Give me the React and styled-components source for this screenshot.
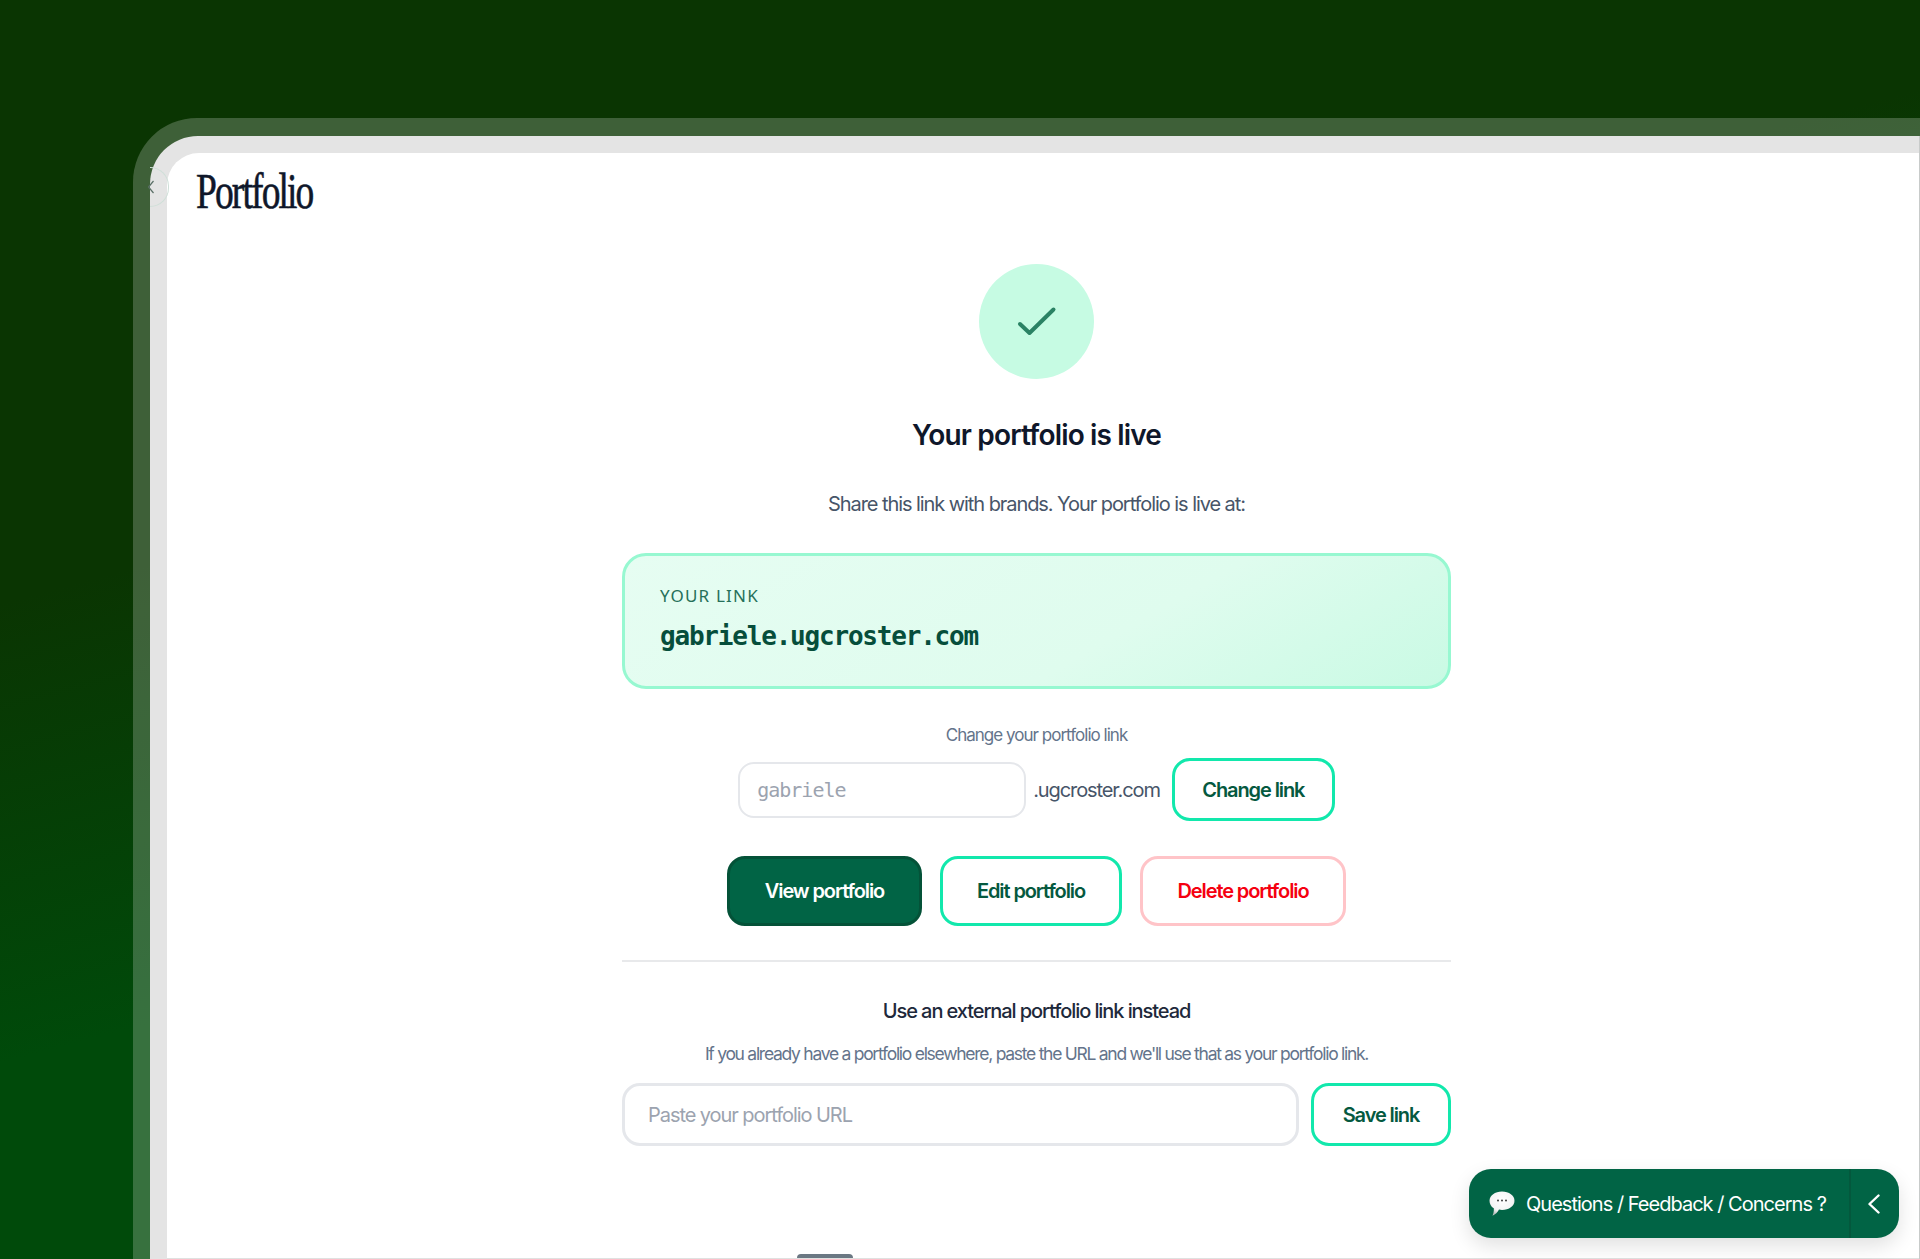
import React from "react";
import styled, { createGlobalStyle } from "styled-components";

const GlobalStyle = createGlobalStyle`
  html, body {
    margin: 0;
    padding: 0;
    height: 1259px;
    overflow: hidden;
    background: #0a3502;
  }
  * {
    box-sizing: border-box;
  }
`;

const Backdrop = styled.div`
  position: relative;
  height: 1259px;
  overflow: hidden;
  padding: 118px 0 0 133px;
  background: linear-gradient(165deg, #0a3502 0%, #0a3502 34%, #004a0a 60%, #004a0a 100%);
`;

const FrameOuter = styled.div`
  height: 1141px;
  padding: 18px 0 0 17px;
  border-radius: 64px 0 0 0;
  background: rgba(255, 255, 255, 0.215);
`;

const FrameInner = styled.div`
  position: relative;
  height: 1123px;
  padding: 17px 0 0 17px;
  border-radius: 48px 0 0 0;
  background: #e4e4e4;
  border-right: 1px solid #c8cbca;
`;

const Screen = styled.div`
  position: relative;
  height: 1106px;
  border-radius: 32px 0 0 0;
  background: #ffffff;
  border-bottom: 1px solid #dfe1e0;
`;

const BackCircle = styled.div`
  position: absolute;
  z-index: 1;
  left: 0;
  top: 31px;
  width: 19px;
  height: 40px;
  border-radius: 0 20px 20px 0;
  border: 1px solid #cfdfd8;
  border-left: 0;
`;

const BackChevron = styled.svg`
  position: absolute;
  left: -3px;
  top: 44px;
`;

const Logo = styled.h1`
  position: absolute;
  left: 29px;
  top: 10px;
  margin: 0;
  font-family: "Liberation Serif", serif;
  font-weight: 400;
  font-size: 50px;
  line-height: 56px;
  letter-spacing: -2.5px;
  color: #0f172a;
  -webkit-text-stroke: 0.6px #0f172a;
  transform: scaleX(0.75);
  transform-origin: left center;
`;

const Column = styled.main`
  width: 829px;
  margin-left: 455px;
  padding-top: 111px;
  display: flex;
  flex-direction: column;
  align-items: center;
  font-family: Inter, sans-serif;
`;

const CheckBadge = styled.div`
  width: 115px;
  height: 115px;
  border-radius: 50%;
  background: #c6fbe3;
  display: flex;
  align-items: center;
  justify-content: center;
`;

const Title = styled.h2`
  margin: 38px 0 0;
  font-size: 28px;
  line-height: 36px;
  font-weight: 600;
  letter-spacing: -0.85px;
  color: #0f172a;
`;

const Lead = styled.p`
  margin: 37px 0 0;
  font-size: 20px;
  line-height: 28px;
  letter-spacing: -1.07px;
  color: #475569;
`;

const LinkCard = styled.section`
  align-self: stretch;
  height: 136px;
  margin-top: 35px;
  padding: 28px 35px 0;
  border: 3px solid #97f8d1;
  border-radius: 24px;
  background: linear-gradient(150deg, #e6fdf2 0%, #dffcee 60%, #c9fae4 100%);
`;

const LinkLabel = styled.div`
  font-family: "Noto Sans", sans-serif;
  font-size: 17px;
  line-height: 24px;
  letter-spacing: 1.2px;
  color: #26705a;
`;

const LinkValue = styled.div`
  margin-top: 12px;
  font-family: "DejaVu Sans Mono", monospace;
  font-size: 26px;
  line-height: 32px;
  font-weight: 700;
  letter-spacing: -1.2px;
  color: #064e3b;
`;

const ChangeLabel = styled.div`
  margin-top: 34px;
  font-size: 17px;
  line-height: 24px;
  letter-spacing: -0.98px;
  color: #64748b;
`;

const ChangeRow = styled.div`
  margin-top: 11px;
  display: flex;
  align-items: center;
`;

const SlugInput = styled.div`
  width: 288px;
  height: 56px;
  padding-left: 17px;
  display: flex;
  align-items: center;
  border: 2px solid #e5e7eb;
  border-radius: 16px;
  font-family: "DejaVu Sans Mono", monospace;
  font-size: 20px;
  letter-spacing: -1px;
  color: #9ca3af;
`;

const Domain = styled.span`
  margin: 0 12px 0 7px;
  font-size: 20px;
  letter-spacing: -1.1px;
  color: #475569;
`;

const Actions = styled.div`
  margin-top: 35px;
  display: flex;
  gap: 18px;
`;

const Button = styled.button`
  height: ${(p) => p.$h}px;
  width: ${(p) => p.$w}px;
  padding: 0;
  border-radius: 18px;
  border: 3px solid ${(p) => (p.$tone === "danger" ? "#ffc4c8" : p.$tone === "solid" ? "#045238" : "#12e8ac")};
  background: ${(p) => (p.$tone === "solid" ? "#016445" : "#ffffff")};
  color: ${(p) => (p.$tone === "danger" ? "#f5000f" : p.$tone === "solid" ? "#ffffff" : "#05593f")};
  font-family: Inter, sans-serif;
  font-size: 20px;
  font-weight: 600;
  letter-spacing: -1.1px;
`;

const Divider = styled.hr`
  align-self: stretch;
  margin: 34px 0 0;
  border: 0;
  border-top: 2px solid #e8e9eb;
`;

const ExternalTitle = styled.h3`
  margin: 35px 0 0;
  font-size: 20px;
  line-height: 28px;
  font-weight: 500;
  letter-spacing: -1.08px;
  color: #1e293b;
`;

const ExternalText = styled.p`
  margin: 15px 0 0;
  font-size: 17.5px;
  line-height: 28px;
  letter-spacing: -1.27px;
  color: #64748b;
`;

const ExternalRow = styled.div`
  align-self: stretch;
  margin-top: 15px;
  display: flex;
  gap: 12px;
`;

const UrlInput = styled.div`
  flex: 1;
  height: 63px;
  padding-left: 23px;
  display: flex;
  align-items: center;
  border: 3px solid #e5e7eb;
  border-radius: 18px;
  font-size: 20px;
  letter-spacing: -1.06px;
  color: #9ca3af;
`;

const FeedbackBar = styled.div`
  position: absolute;
  right: 20px;
  bottom: 20px;
  width: 430px;
  height: 69px;
  display: flex;
  border-radius: 22px;
  background: #016445;
  box-shadow: 0 8px 20px rgba(0, 0, 0, 0.12);
  color: #ffffff;
  font-family: Inter, sans-serif;
  font-size: 20px;
  letter-spacing: -0.98px;
`;

const FeedbackLabel = styled.div`
  flex: 1;
  display: flex;
  align-items: center;
  gap: 11px;
  padding-left: 20px;
`;

const FeedbackToggle = styled.div`
  width: 50px;
  padding-right: 3px;
  display: flex;
  align-items: center;
  justify-content: center;
  border-left: 2px solid #04583d;
`;

const Tab = styled.div`
  position: absolute;
  left: 630px;
  bottom: 0;
  width: 56px;
  height: 4px;
  border-radius: 5px 5px 0 0;
  background: #6b7883;
`;

export default function App() {
  return (
    <>
      <GlobalStyle />
      <Backdrop>
        <FrameOuter>
          <FrameInner>
            <BackCircle />
            <BackChevron width="8" height="14" viewBox="0 0 8 14" fill="none">
              <path d="M6.5 1 L1.5 7 L6.5 13" stroke="#5a6f66" strokeWidth="1.2" />
            </BackChevron>
            <Screen>
              <Logo>Portfolio</Logo>
              <Column>
                <CheckBadge>
                  <svg width="44" height="44" viewBox="0 0 44 44" fill="none">
                    <path d="M5 24 L14.5 33 L38.5 9.5" stroke="#2a8264" strokeWidth="4" strokeLinecap="round" strokeLinejoin="round" />
                  </svg>
                </CheckBadge>
                <Title>Your portfolio is live</Title>
                <Lead>Share this link with brands. Your portfolio is live at:</Lead>
                <LinkCard>
                  <LinkLabel>YOUR LINK</LinkLabel>
                  <LinkValue>gabriele.ugcroster.com</LinkValue>
                </LinkCard>
                <ChangeLabel>Change your portfolio link</ChangeLabel>
                <ChangeRow>
                  <SlugInput>gabriele</SlugInput>
                  <Domain>.ugcroster.com</Domain>
                  <Button $w={163} $h={63}>Change link</Button>
                </ChangeRow>
                <Actions>
                  <Button $tone="solid" $w={195} $h={70}>View portfolio</Button>
                  <Button $w={182} $h={70}>Edit portfolio</Button>
                  <Button $tone="danger" $w={206} $h={70}>Delete portfolio</Button>
                </Actions>
                <Divider />
                <ExternalTitle>Use an external portfolio link instead</ExternalTitle>
                <ExternalText>If you already have a portfolio elsewhere, paste the URL and we'll use that as your portfolio link.</ExternalText>
                <ExternalRow>
                  <UrlInput>Paste your portfolio URL</UrlInput>
                  <Button $w={140} $h={63}>Save link</Button>
                </ExternalRow>
              </Column>
              <FeedbackBar>
                <FeedbackLabel>
                  <svg width="26" height="26" viewBox="0 0 26 26">
                    <defs>
                      <radialGradient id="bubble" cx="50%" cy="35%" r="65%">
                        <stop offset="0%" stopColor="#ffffff" />
                        <stop offset="70%" stopColor="#f4f4f4" />
                        <stop offset="100%" stopColor="#b9bdbb" />
                      </radialGradient>
                    </defs>
                    <path d="M13 0.5 C20 0.5 25.5 4.5 25.5 9.7 C25.5 15 20 18.9 13 18.9 C12 18.9 11 18.8 10 18.6 C8.5 21.5 6.5 23.5 3.5 24.8 C4.5 22.5 5 20 4.8 17.3 C2 15.6 0.5 12.9 0.5 9.7 C0.5 4.5 6 0.5 13 0.5 Z" fill="url(#bubble)" />
                    <circle cx="9" cy="9.5" r="1" fill="#3d3d3d" />
                    <circle cx="13" cy="9.5" r="1" fill="#3d3d3d" />
                    <circle cx="17" cy="9.5" r="1" fill="#3d3d3d" />
                  </svg>
                  Questions / Feedback / Concerns ?
                </FeedbackLabel>
                <FeedbackToggle>
                  <svg width="14" height="20" viewBox="0 0 14 20" fill="none">
                    <path d="M11.5 1.5 L2.5 10 L11.5 18.5" stroke="#ffffff" strokeWidth="2.4" strokeLinecap="round" strokeLinejoin="round" />
                  </svg>
                </FeedbackToggle>
              </FeedbackBar>
              <Tab />
            </Screen>
          </FrameInner>
        </FrameOuter>
      </Backdrop>
    </>
  );
}
